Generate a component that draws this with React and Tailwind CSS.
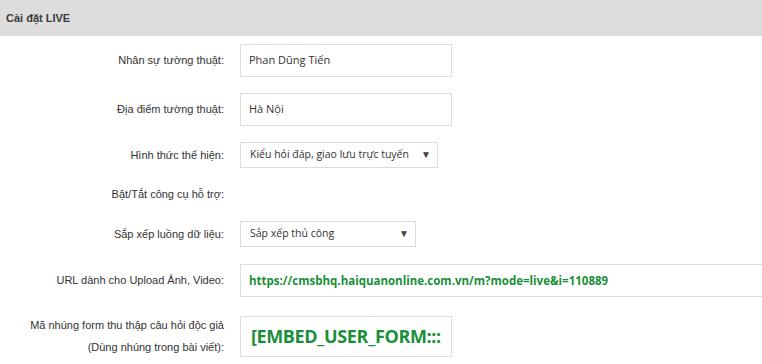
import React from 'react';

const labelFont = { fontFamily: '"Liberation Sans", Arial, sans-serif' };

function Row({ label, mt, h, children }) {
  return (
    <div className={`flex items-center ${mt}`}>
      <div className="w-[224px] shrink-0 text-right text-[11px] text-[#333]" style={labelFont}>
        {label}
      </div>
      <div className={`ml-[16px] flex items-center ${h}`}>{children}</div>
    </div>
  );
}

function Select({ value, width }) {
  return (
    <div className={`relative flex h-[26px] items-center border border-[#dddddd] bg-white pl-[9px] text-[10.5px] text-[#333] ${width}`}>
      <span className="font-['Open_Sans',sans-serif]">{value}</span>
      <span className="absolute right-[6px] top-[5px] text-[10px] leading-[12px] text-[#444]">▼</span>
    </div>
  );
}

export default function App() {
  return (
    <div className="w-[762px] h-[364px] overflow-hidden bg-white">
      {/* Header */}
      <div className="flex h-[36px] items-center bg-[#dddddd] pl-[6px]">
        <span className="text-[11px] font-bold text-[#3a3a3a]" style={labelFont}>
          Cài đặt LIVE
        </span>
      </div>

      <Row label="Nhân sự tường thuật:" mt="mt-[8px]" h="h-[33px]">
        <div className="flex h-[33px] w-[212px] items-center border border-[#dddddd] pl-[8px] font-['Open_Sans',sans-serif] text-[11px] text-[#333]">
          Phan Dũng Tiến
        </div>
      </Row>

      <Row label="Địa điểm tường thuật:" mt="mt-[16px]" h="h-[33px]">
        <div className="flex h-[33px] w-[212px] items-center border border-[#dddddd] pl-[8px] font-['Open_Sans',sans-serif] text-[11px] text-[#333]">
          Hà Nội
        </div>
      </Row>

      <Row label="Hình thức thể hiện:" mt="mt-[16px]" h="h-[26px]">
        <Select value="Kiểu hỏi đáp, giao lưu trực tuyến" width="w-[198px]" />
      </Row>

      <Row label="Bật/Tắt công cụ hỗ trợ:" mt="mt-[13px]" h="h-[26px]" />

      <Row label="Sắp xếp luồng dữ liệu:" mt="mt-[14px]" h="h-[26px]">
        <Select value="Sắp xếp thủ công" width="w-[176px]" />
      </Row>

      <Row label="URL dành cho Upload Ảnh, Video:" mt="mt-[17px]" h="h-[33px]">
        <div className="flex h-[33px] w-[540px] items-center border border-[#dddddd] pl-[8px] font-['Open_Sans',sans-serif] text-[11.5px] font-bold text-[#1a8f3a]">
          https://cmsbhq.haiquanonline.com.vn/m?mode=live&amp;i=110889
        </div>
      </Row>

      <div className="mt-[17px] flex items-center">
        <div className="w-[224px] shrink-0 text-right text-[11px] leading-[22px] text-[#333]" style={labelFont}>
          Mã nhúng form thu thập câu hỏi độc giả
          <br />
          (Dùng nhúng trong bài viết):
        </div>
        <div className="ml-[16px] flex h-[41px] w-[212px] items-center overflow-hidden whitespace-nowrap border border-[#dddddd] pl-[10px] font-['Open_Sans',sans-serif] text-[18px] font-bold tracking-[-0.4px] text-[#1a8f3a]">
          [EMBED_USER_FORM:::
        </div>
      </div>
    </div>
  );
}
